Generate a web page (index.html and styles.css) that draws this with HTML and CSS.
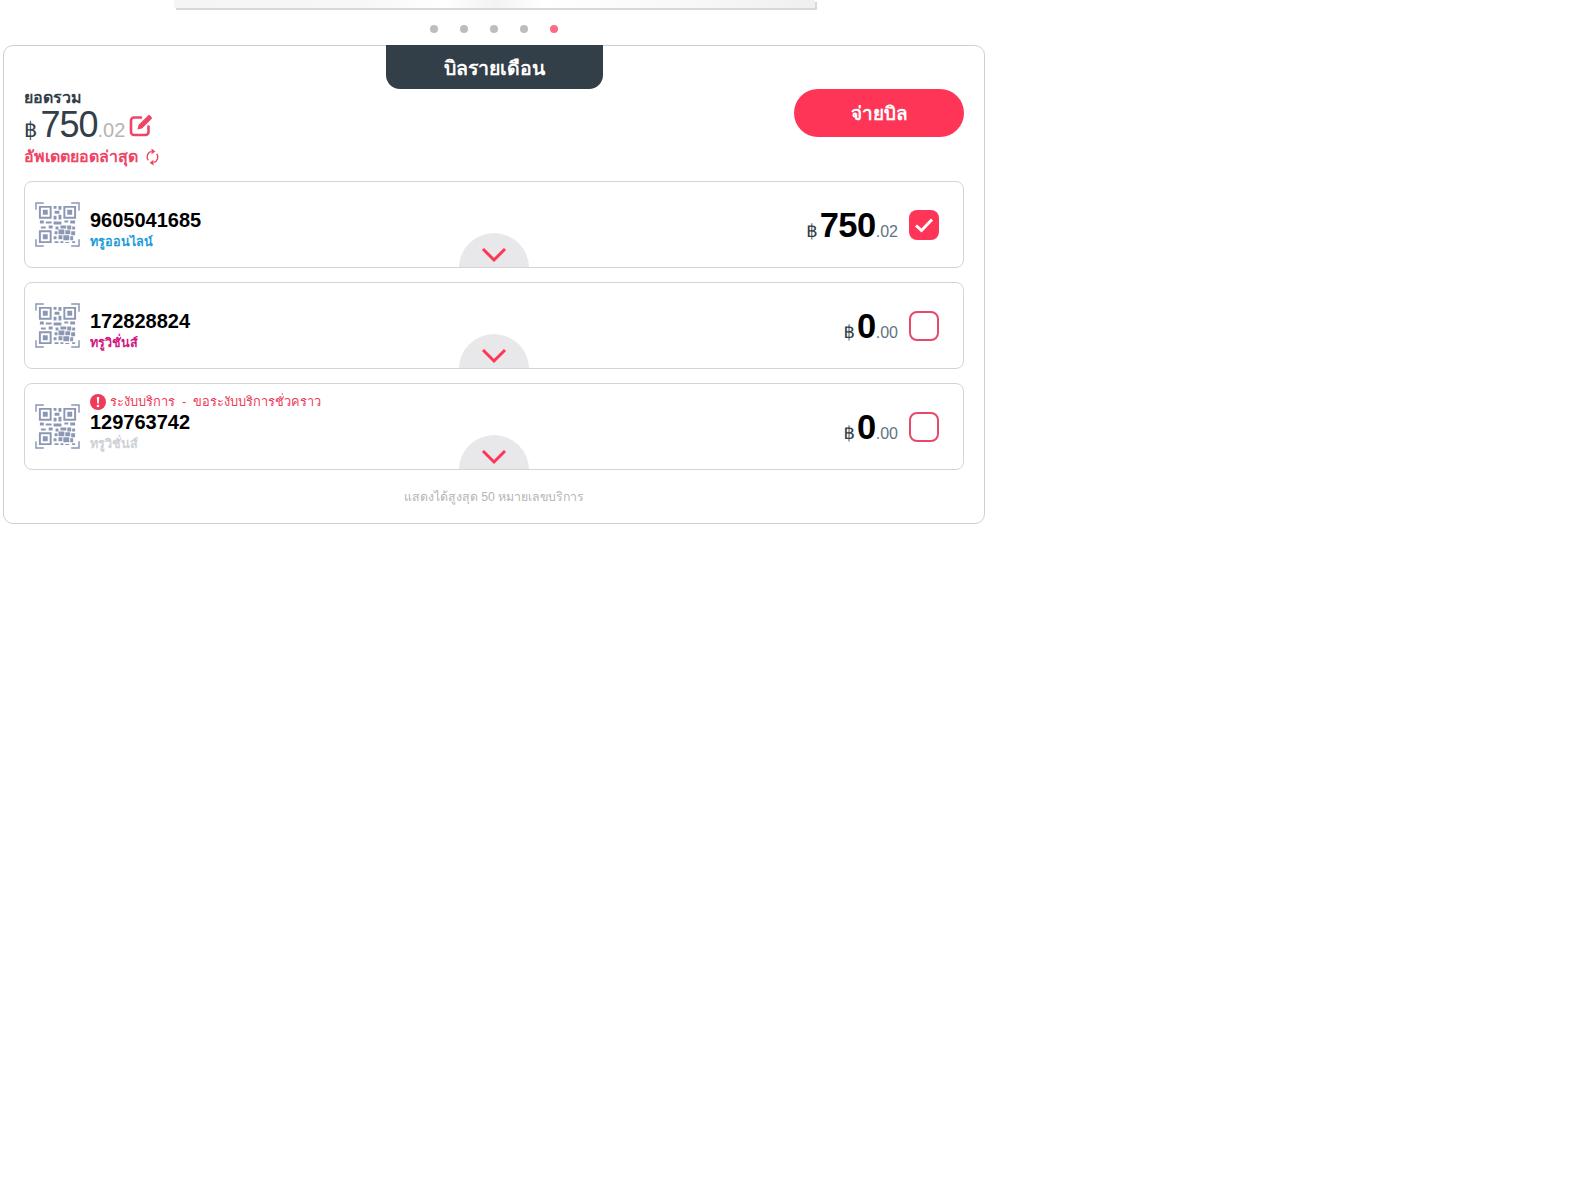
FILE: index.html
```html
<!DOCTYPE html>
<html lang="th">
<head>
  <meta charset="UTF-8">
  <title>บิลรายเดือน</title>
  <link rel="stylesheet" href="styles.css">
</head>
<body>
  <svg class="defs" width="0" height="0">
    <symbol id="qr" viewBox="0 0 46 46">
      <path d="M1 8V1h8M37 1h8v8M45 38v7h-8M9 45H1v-7" fill="none" stroke="#8c97b3" stroke-width="1.5"/>
      <path d="M5 5h11v11H5zM30 5h11v11H30zM5 30h11v11H5z" fill="none" stroke="#8c97b3" stroke-width="2"/>
      <path d="M8 8h5v5H8zM33 8h5v5h-5zM8 33h5v5H8z" fill="#8c97b3"/>
      <path d="M19 4h3v3h-3zM24 4h3v4h-3zM20 9h5v3h-5zM19 14h3v4h-3zM24 13h3v5h-3zM5 19h4v3H5zM11 20h6v2h-6zM19 20h8v3h-8zM30 19h4v2h-4zM36 19h5v3h-5zM6 25h5v2H6zM14 24h4v3h-4zM21 25h3v3h-3zM26 24h6v3h-6zM33 24h4v4h-4zM38 25h3v3h-3zM20 30h3v3h-3zM24 28h6v5h-6zM31 29h5v4h-5zM37 30h4v4h-4zM19 35h3v3h-3zM24 34h4v4h-4zM29 34h6v5h-6zM36 35h3v4h-3zM20 40h4v2h-4zM26 40h3v2h-3zM31 41h4v1h-4zM38 40h3v2h-3z" fill="#8c97b3"/>
    </symbol>
    <symbol id="chev" viewBox="0 0 26 16">
      <path d="M2 2l11 11L24 2" fill="none" stroke="#fe3557" stroke-width="3"/>
    </symbol>
  </svg>

  <div class="banner-wrap">
    <div class="banner"></div>
  </div>

  <div class="dots">
    <span class="dot"></span>
    <span class="dot"></span>
    <span class="dot"></span>
    <span class="dot"></span>
    <span class="dot active"></span>
  </div>

  <div class="bill-card">
    <div class="bill-tab">บิลรายเดือน</div>

    <div class="summary">
      <div class="summary-left">
        <div class="total-label">ยอดรวม</div>
        <div class="total-amount">
          <span class="baht">฿</span><span class="big">750</span><span class="cents">.02</span>
          <svg class="edit-icon" viewBox="0 0 24 24" width="24" height="24">
            <path d="M19.500 13.500V19a3 3 0 0 1-3 3H5a3 3 0 0 1-3-3V7.500a3 3 0 0 1 3-3h7" fill="none" stroke="#ef4565" stroke-width="2.600" stroke-linecap="round"/>
            <path d="M9.500 12L19 2.500c.6-.6 1.400-.6 2 0l1.500 1.500c.6.6.6 1.400 0 2L13 15.500 8.500 16.500z" fill="#ef4565"/>
          </svg>
        </div>
        <div class="refresh">อัพเดตยอดล่าสุด
          <svg class="refresh-icon" viewBox="0 0 16 18" width="15" height="18">
            <path d="M7 3A6 6 0 0 0 3.500 12.500M9 15A6 6 0 0 0 12.500 5.500" fill="none" stroke="#ef4565" stroke-width="1.500"/>
            <path d="M7 0v6l4-3zM9 18v-6l-4 3z" fill="#ef4565"/>
          </svg>
        </div>
      </div>
      <button class="pay-btn">จ่ายบิล</button>
    </div>

    <div class="item">
      <svg class="qr"><use href="#qr"/></svg>
      <div class="item-info">
        <div class="number">9605041685</div>
        <div class="service online">ทรูออนไลน์</div>
      </div>
      <div class="item-amount">
        <span class="baht">฿</span><span class="big">750</span><span class="cents">.02</span>
      </div>
      <span class="check checked">
        <svg viewBox="0 0 30 30" width="30" height="30"><path d="M7 15.500l5.500 5L23 9.500" fill="none" stroke="#fff" stroke-width="3"/></svg>
      </span>
      <div class="expand"><svg class="chev"><use href="#chev"/></svg></div>
    </div>

    <div class="item">
      <svg class="qr"><use href="#qr"/></svg>
      <div class="item-info">
        <div class="number">172828824</div>
        <div class="service vision">ทรูวิชั่นส์</div>
      </div>
      <div class="item-amount">
        <span class="baht">฿</span><span class="big">0</span><span class="cents">.00</span>
      </div>
      <span class="check"></span>
      <div class="expand"><svg class="chev"><use href="#chev"/></svg></div>
    </div>

    <div class="item suspended">
      <svg class="qr"><use href="#qr"/></svg>
      <div class="item-info">
        <div class="warning">
          <svg viewBox="0 0 16 16" width="16" height="16"><circle cx="8" cy="8" r="8" fill="#ef3a5a"/><path d="M6.800 3h2.400l-.4 6.500H7.200z" fill="#fff"/><circle cx="8" cy="12" r="1.300" fill="#fff"/></svg>
          ระงับบริการ&nbsp; - &nbsp;ขอระงับบริการชั่วคราว
        </div>
        <div class="number">129763742</div>
        <div class="service muted">ทรูวิชั่นส์</div>
      </div>
      <div class="item-amount">
        <span class="baht">฿</span><span class="big">0</span><span class="cents">.00</span>
      </div>
      <span class="check"></span>
      <div class="expand"><svg class="chev"><use href="#chev"/></svg></div>
    </div>

    <div class="limit-note">แสดงได้สูงสุด 50 หมายเลขบริการ</div>
  </div>
</body>
</html>
```

FILE: styles.css
```css
* {
  box-sizing: border-box;
}

body {
  margin: 0;
  background: #fff;
  font-family: "Liberation Sans", "Noto Sans", sans-serif;
  color: #323e48;
  width: 985px;
  padding-left: 3px;
}

.defs {
  display: block;
  height: 0;
}

.banner-wrap {
  height: 10px;
  padding-left: 171px;
}

.banner {
  width: 641px;
  height: 8px;
  background: linear-gradient(115deg, #f5f5f5 0%, #f7f7f7 30%, #fff 42%, #f3f3f3 50%, #fff 58%, #f8f8f8 80%, #efefef 100%);
  box-shadow: 2px 2px 0 #d8d8d8;
}

.dots {
  display: flex;
  justify-content: center;
  gap: 22px;
  height: 35px;
  padding-top: 15px;
}

.dot {
  width: 8px;
  height: 8px;
  border-radius: 50%;
  background: #bdbdbd;
}

.dot.active {
  background: #fc6d85;
}

.bill-card {
  position: relative;
  width: 982px;
  height: 479px;
  border: 1px solid #cfcfcf;
  border-radius: 10px;
  padding: 0 20px;
}

.bill-tab {
  width: 217px;
  height: 44px;
  margin: -1px auto 0;
  background: #323e48;
  color: #fff;
  border-radius: 0 0 14px 14px;
  font-size: 19.500px;
  font-weight: bold;
  text-align: center;
  line-height: 47px;
}

.summary {
  display: flex;
  justify-content: space-between;
  align-items: flex-start;
  height: 92px;
}

.total-label {
  font-size: 16px;
  font-weight: bold;
  line-height: 18px;
}

.total-amount {
  display: flex;
  align-items: baseline;
  height: 34px;
  line-height: 36px;
}

.total-amount .baht {
  font-family: "DejaVu Sans", sans-serif;
  font-size: 21px;
  margin-right: 3px;
}

.total-amount .big {
  font-size: 36px;
  letter-spacing: -1px;
}

.total-amount .cents {
  font-size: 20px;
  color: #b5b5b5;
}

.edit-icon {
  margin-left: 4px;
  margin-top: 2px;
  align-self: center;
}

.refresh {
  display: flex;
  align-items: center;
  gap: 7px;
  margin-top: 3px;
  font-size: 16px;
  font-weight: bold;
  color: #ef4565;
}

.pay-btn {
  width: 170px;
  height: 48px;
  border: none;
  border-radius: 24px;
  background: #fe3557;
  color: #fff;
  font: bold 19px "Liberation Sans", "Noto Sans", sans-serif;
}

.item {
  position: relative;
  display: flex;
  align-items: center;
  height: 87px;
  margin-bottom: 14px;
  padding: 0 24px 0 10px;
  border: 1px solid #d4d4d4;
  border-radius: 8px;
  overflow: hidden;
}

.qr {
  width: 45px;
  height: 45px;
  margin-right: 10px;
  flex-shrink: 0;
}

.item-info {
  flex: 1;
  padding-top: 11px;
}

.suspended .item-info {
  padding-top: 0;
  margin-top: -7px;
}

.number {
  font-size: 20px;
  font-weight: bold;
  color: #000;
  line-height: 23px;
}

.service {
  font-size: 12.600px;
  font-weight: bold;
  line-height: 20px;
}

.service.online {
  color: #1d9cd8;
}

.service.vision {
  color: #d1187f;
}

.service.muted {
  color: #cdd1d6;
}

.warning {
  display: flex;
  align-items: center;
  gap: 4px;
  font-size: 12.800px;
  color: #ef3a5a;
  line-height: 18px;
}

.item-amount {
  display: flex;
  align-items: baseline;
  margin-right: 11px;
  padding-top: 1px;
}

.item-amount .baht {
  font-family: "DejaVu Sans", sans-serif;
  font-size: 18px;
  margin-right: 2px;
}

.item-amount .big {
  font-size: 34.500px;
  font-weight: bold;
  color: #000;
  letter-spacing: -0.5px;
}

.item-amount .cents {
  font-size: 16px;
  color: #5f7385;
}

.check {
  width: 30px;
  height: 30px;
  border: 2px solid #e8486a;
  border-radius: 8px;
  flex-shrink: 0;
}

.check.checked {
  background: #fe3557;
  border: none;
}

.check svg {
  display: block;
}

.expand {
  position: absolute;
  left: 50%;
  bottom: -1px;
  width: 70px;
  height: 35px;
  margin-left: -35px;
  background: #e8e8ea;
  border-radius: 35px 35px 0 0;
  text-align: center;
  padding-top: 14px;
}

.chev {
  display: block;
  width: 26px;
  height: 16px;
  margin: 0 auto;
}

.limit-note {
  margin-top: 17px;
  text-align: center;
  font-size: 12.300px;
  color: #b5b5b5;
}
```
